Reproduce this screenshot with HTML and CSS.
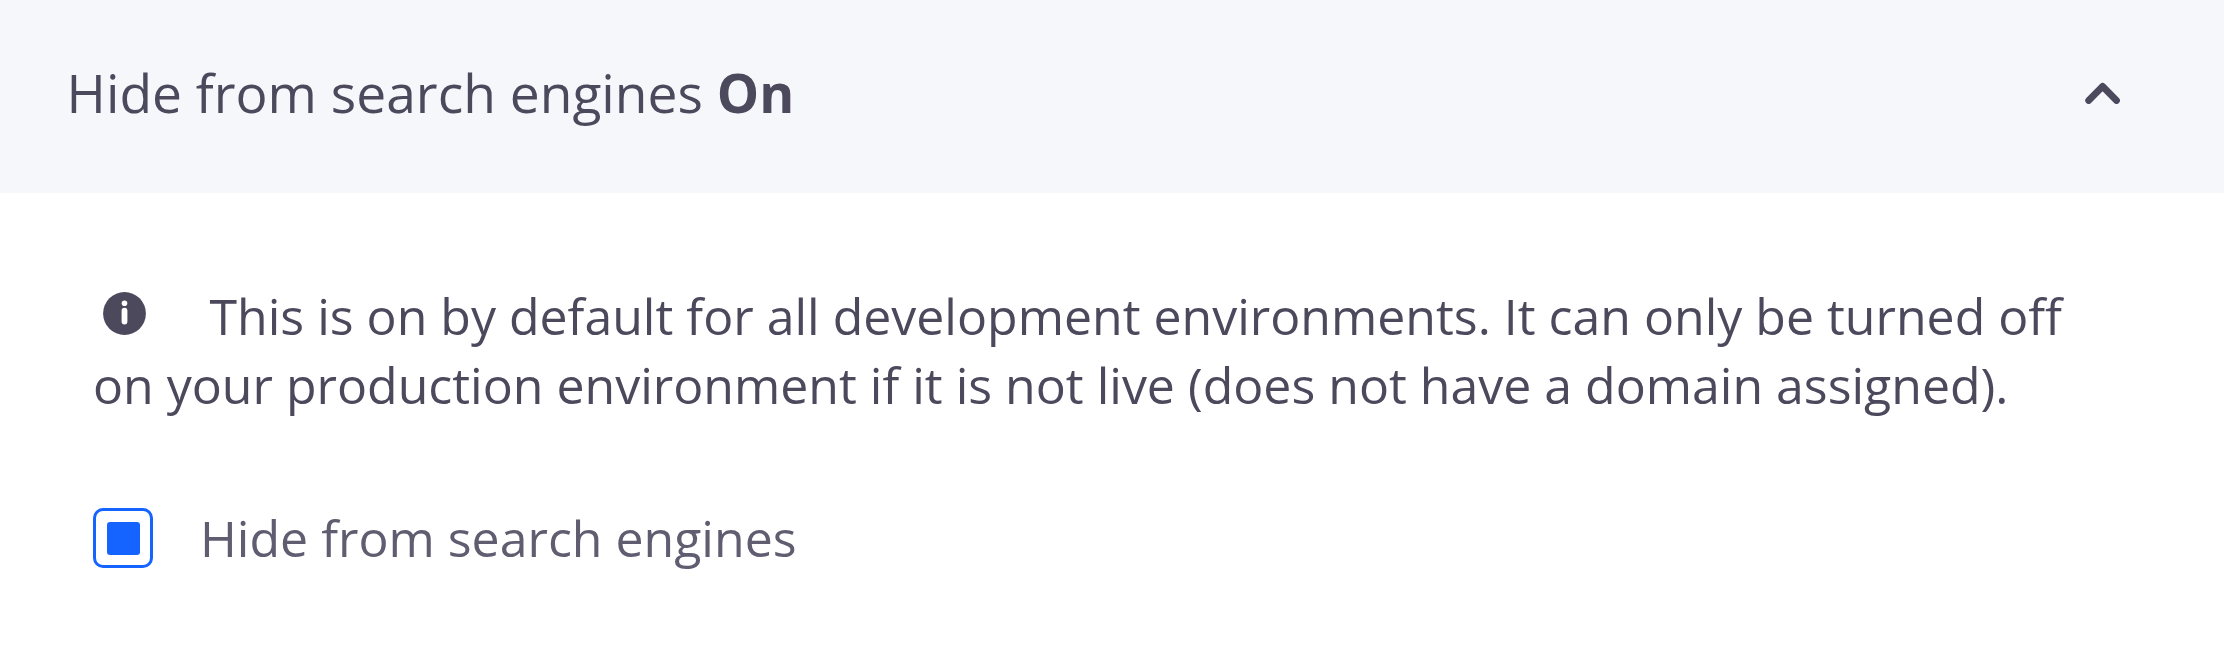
FILE: index.html
```html
<!DOCTYPE html>
<html lang="en">
<head>
<meta charset="utf-8">
<title>Hide from search engines</title>
<link rel="stylesheet" href="styles.css">
</head>
<body>
<section class="panel">
  <header class="panel-header">
    <h2 class="panel-title">Hide from search engines <strong>On</strong></h2>
    <svg class="chevron" viewBox="0 0 36 22" aria-hidden="true"><path d="M3.8 18.4 17.6 4.4l13.8 14"/></svg>
  </header>
  <div class="panel-body">
    <p class="note"><svg class="info" viewBox="0 0 43 43" aria-hidden="true"><circle class="info-disc" cx="21.5" cy="21.5" r="21.4"/><circle class="info-mark" cx="21.5" cy="11.2" r="2.8"/><rect class="info-mark" x="18.6" y="15.8" width="5.8" height="16.6" rx="2.9"/></svg>This is on by default for all development environments. It can only be turned off<br>on your production environment if it is not live (does not have a domain assigned).</p>
    <label class="option"><span class="checkbox"></span><span class="option-text">Hide from search engines</span></label>
  </div>
</section>
</body>
</html>
```
FILE: styles.css
```css
body { margin: 0; background: #fff; color: #4c495d; font-family: "Open Sans", sans-serif; }
.panel-header { display: flex; align-items: center; justify-content: space-between; box-sizing: border-box; height: 193px; padding: 0 103px 8px 66.6px; background: #f5f7fb; }
.panel-title { margin: 0; font-size: 53.33px; font-weight: 400; line-height: 75px; white-space: nowrap; }
.panel-title strong { font-weight: 700; }
.chevron { width: 36px; height: 22px; fill: none; stroke: #4c495d; stroke-width: 7; stroke-linecap: round; stroke-linejoin: round; }
.panel-body { padding: 89px 93px 0; }
.note { margin: 0; font-size: 50px; line-height: 69px; white-space: nowrap; }
.info { width: 43px; height: 43px; margin: 0 63.5px 0 10px; }
.info-disc { fill: #4c495d; }
.info-mark { fill: #fff; }
.option { display: flex; align-items: center; gap: 47px; margin-top: 83px; }
.checkbox { display: grid; place-items: center; box-sizing: border-box; width: 60px; height: 60px; border: 3px solid #1664ff; border-radius: 10px; }
.checkbox::before { content: ""; width: 33px; height: 33px; border-radius: 3px; background: #1664ff; }
.option-text { color: #605d70; font-size: 50px; line-height: 70px; white-space: nowrap; }
```
